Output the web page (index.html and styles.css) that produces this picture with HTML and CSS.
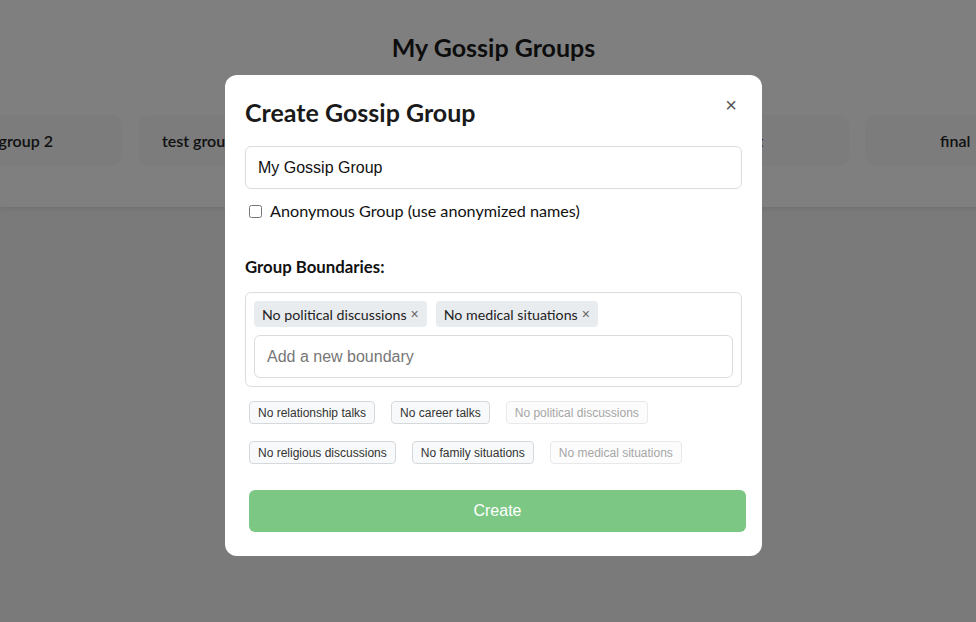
FILE: index.html
```html
<!DOCTYPE html>
<html lang="en">
<head>
<meta charset="utf-8">
<title>My Gossip Groups</title>
<link rel="stylesheet" href="styles.css">
</head>
<body>
<div class="page">
  <header class="band">
    <h1 class="page-title">My Gossip Groups</h1>
    <div class="group-row">
      <div class="group-card card-a">group 2</div>
      <div class="group-card card-b">test group with friends</div>
      <div class="group-card card-c">work friends</div>
      <div class="group-card card-d">latest</div>
      <div class="group-card card-e">final</div>
    </div>
  </header>
</div>

<div class="overlay">
  <div class="modal">
    <div class="modal-head">
      <h2 class="modal-title">Create Gossip Group</h2>
      <span class="close">&times;</span>
    </div>
    <input class="text-input name-input" type="text" value="My Gossip Group">
    <label class="check-row"><input type="checkbox" class="check"> Anonymous Group (use anonymized names)</label>

    <h3 class="section-label">Group Boundaries:</h3>
    <div class="boundary-box">
      <div class="tags">
        <span class="tag">No political discussions <span class="tag-x">&times;</span></span>
        <span class="tag">No medical situations <span class="tag-x">&times;</span></span>
      </div>
      <input class="text-input boundary-input" type="text" placeholder="Add a new boundary">
    </div>

    <div class="suggestions">
      <div class="sugg-row">
        <button class="sugg">No relationship talks</button>
        <button class="sugg">No career talks</button>
        <button class="sugg" disabled>No political discussions</button>
      </div>
      <div class="sugg-row">
        <button class="sugg">No religious discussions</button>
        <button class="sugg">No family situations</button>
        <button class="sugg" disabled>No medical situations</button>
      </div>
    </div>

    <button class="create" disabled>Create</button>
  </div>
</div>
</body>
</html>
```

FILE: styles.css
```css
html, body {
  margin: 0;
  padding: 0;
  overflow: hidden;
}
body {
  background: #f4f4f4;
  font-family: "Lato", "Noto Sans", sans-serif;
  color: #222;
  height: 622px;
}
.page {
  width: 987px;
}
.band {
  background: #ffffff;
  height: 207px;
  box-shadow: 0 2px 6px rgba(0,0,0,0.08);
  padding-top: 33px;
  box-sizing: border-box;
}
.page-title {
  margin: 0;
  text-align: center;
  font-size: 25px;
  font-weight: 700;
  line-height: 28px;
  color: #1a1a1a;
}
.group-row {
  display: flex;
  gap: 16px;
  margin-top: 54px;
  margin-left: -60px;
}
.group-card {
  flex: none;
  height: 51px;
  background: #f8f8f9;
  border-radius: 10px;
  display: flex;
  align-items: center;
  justify-content: center;
  font-size: 16px;
  font-weight: 600;
  color: #222;
  white-space: nowrap;
  box-sizing: border-box;
}
.card-a { width: 182px; justify-content: flex-end; padding-right: 69px; }
.card-b { width: 226px; justify-content: flex-start; padding-left: 23px; margin-left: 1px; }
.card-c { width: 226px; }
.card-d { width: 226px; justify-content: flex-end; padding-right: 86px; }
.card-e { width: 182px; justify-content: flex-start; padding-left: 75px; }

.overlay {
  position: fixed;
  left: 0;
  top: 0;
  width: 987px;
  height: 622px;
  background: rgba(0,0,0,0.5);
  display: flex;
  justify-content: center;
  align-items: flex-start;
  padding-top: 75px;
  box-sizing: border-box;
}
.modal {
  width: 537px;
  box-sizing: border-box;
  background: #fff;
  border-radius: 12px;
  padding: 20px 20px 24px 20px;
}
.modal-head {
  display: flex;
  justify-content: space-between;
  align-items: flex-start;
  height: 51px;
}
.modal-title {
  margin: 0;
  margin-top: 1px;
  font-size: 25px;
  line-height: 32px;
  font-weight: 700;
  color: #1a1a1a;
}
.close {
  font-family: "Liberation Sans", Arial, sans-serif;
  font-size: 20px;
  line-height: 20px;
  color: #555;
  margin-top: 0px;
  margin-right: 5px;
}
.text-input {
  display: block;
  width: 100%;
  box-sizing: border-box;
  height: 43px;
  border: 1px solid #dcdcdc;
  border-radius: 6px;
  padding: 0 12px;
  font-family: "Liberation Sans", Arial, sans-serif;
  font-size: 16px;
  color: #111;
  background: #fff;
  outline: none;
}
.text-input::placeholder {
  color: #777;
}
.check-row {
  display: flex;
  align-items: center;
  margin-top: 12px;
  font-size: 16.2px;
  line-height: 20px;
  color: #111;
  gap: 8px;
}
.check {
  margin: 0 0 0 4px;
  width: 13px;
  height: 13px;
}
.section-label {
  margin: 36px 0 15px 0;
  font-size: 16.8px;
  line-height: 20px;
  font-weight: 700;
  color: #111;
}
.boundary-box {
  border: 1px solid #dcdcdc;
  border-radius: 6px;
  padding: 8px 8px 8px 8px;
}
.tags {
  display: flex;
  gap: 9px;
  margin-bottom: 8px;
}
.tag {
  background: #e9ecef;
  border-radius: 4px;
  height: 26px;
  padding: 0 8px;
  display: flex;
  align-items: center;
  gap: 4px;
  font-size: 14.2px;
  color: #222;
}
.tag-x {
  font-family: "Liberation Sans", Arial, sans-serif;
  font-size: 14px;
  color: #666;
}
.boundary-input {
  height: 43px;
}
.suggestions {
  margin-top: 14px;
  display: flex;
  flex-direction: column;
  gap: 17px;
}
.sugg-row {
  display: flex;
  gap: 16px;
  padding-left: 4px;
}
.sugg {
  font-family: "Liberation Sans", Arial, sans-serif;
  font-size: 12px;
  height: 23px;
  padding: 0 8px;
  background: #f8f9fa;
  border: 1px solid #d6d9dc;
  border-radius: 4px;
  color: #333;
}
.sugg:disabled {
  color: #a6a6a6;
  border-color: #e8e9ea;
  background: #fcfcfc;
}
.create {
  display: block;
  margin: 26px 0 0 4px;
  width: 100%;
  height: 42px;
  border: none;
  border-radius: 6px;
  background: #7dc785;
  color: #fff;
  font-family: "Liberation Sans", Arial, sans-serif;
  font-size: 16px;
}
```
